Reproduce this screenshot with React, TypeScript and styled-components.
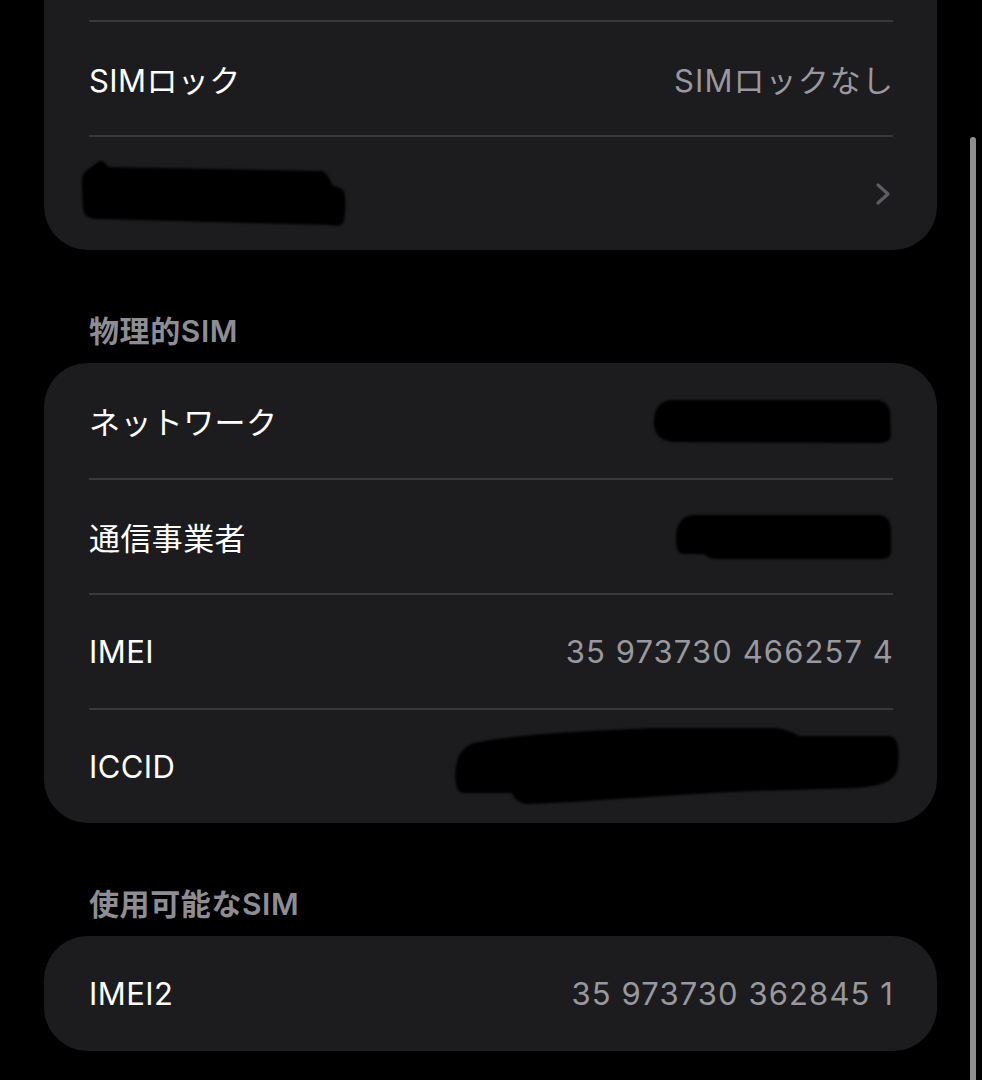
import { FC } from 'react';
import styled, { createGlobalStyle } from 'styled-components';

const GlobalStyle = createGlobalStyle`
  html, body {
    margin: 0;
    padding: 0;
    background: #000;
    overflow: hidden;
  }
  body {
    font-family: 'Inter', 'Noto Sans CJK JP', sans-serif;
    -webkit-font-smoothing: antialiased;
  }
`;

const Screen = styled.div`
  position: relative;
  width: 982px;
  height: 1080px;
  overflow: hidden;
  background: #000;
`;

const Content = styled.div`
  display: flex;
  flex-direction: column;
  margin-top: -95px;
  padding: 0 45px 0 44px;
`;

const Card = styled.div`
  background: #1c1c1e;
  border-radius: 44px;
  display: flex;
  flex-direction: column;
`;

const SectionHeader = styled.div`
  color: #8d8d93;
  font-size: 30px;
  font-weight: 600;
  line-height: 34px;
  letter-spacing: 0.6px;
  padding: 64px 45px 15px;
`;

const Row = styled.div`
  box-sizing: border-box;
  height: 115px;
  margin: 0 44px 0 45px;
  display: flex;
  align-items: center;
  justify-content: space-between;

  & + & {
    border-top: 2px solid #38383a;
  }
`;

const Label = styled.span`
  color: #fff;
  font-size: 31px;
  letter-spacing: 0.4px;
`;

const Value = styled.span`
  color: #98989e;
  font-size: 31px;
  letter-spacing: 1.1px;
  margin-right: -1px;
`;

const Redact = styled.svg<{ $shift?: number; $trail?: number }>`
  display: block;
  filter: blur(1.2px);
  margin-left: ${(p) => p.$shift ?? 0}px;
  margin-right: ${(p) => p.$trail ?? 0}px;
`;

const ChevronIcon = styled.svg`
  display: block;
  margin-right: 2px;
`;

const ScrollThumb = styled.div`
  position: absolute;
  right: 6px;
  top: 137px;
  width: 6px;
  height: 960px;
  border-radius: 3px;
  background: #8e8e90;
`;

const Chevron: FC = () => (
  <ChevronIcon width="16" height="24" viewBox="0 0 16 24">
    <polyline
      points="3,3 13,12 3,21"
      fill="none"
      stroke="#5c5c62"
      strokeWidth="3.2"
      strokeLinecap="round"
      strokeLinejoin="round"
    />
  </ChevronIcon>
);

const App: FC = () => {
  return (
    <Screen>
      <GlobalStyle />
      <Content>
        <Card>
          <Row />
          <Row>
            <Label>SIMロック</Label>
            <Value>SIMロックなし</Value>
          </Row>
          <Row>
            <Redact $shift={-9} width="268" height="70" viewBox="0 0 268 70">
              <path
                d="M4 14 C8 10 14 6 18 3 C22 1 26 4 28 8 L240 12 C246 12 250 20 252 26 L262 30 C266 32 266 50 264 62 C262 68 255 67 250 66 L20 60 C10 60 4 58 3 50 L2 24 C2 18 3 16 4 14 Z"
                fill="#000"
              />
            </Redact>
            <Chevron />
          </Row>
        </Card>

        <SectionHeader>物理的SIM</SectionHeader>
        <Card>
          <Row>
            <Label>ネットワーク</Label>
            <Redact width="240" height="46" viewBox="0 0 240 46">
              <path
                d="M20 2 L225 2 C233 3 236 8 237 14 L238 38 C237 43 232 45 226 45 L22 44 C8 44 1 36 1 24 C1 10 8 2 20 2 Z"
                fill="#000"
              />
            </Redact>
          </Row>
          <Row>
            <Label>通信事業者</Label>
            <Redact width="218" height="48" viewBox="0 0 218 48">
              <path
                d="M18 2 L205 2 C213 3 216 10 216 18 L216 38 C216 45 210 46 204 46 L40 46 C34 46 32 42 28 41 L8 41 C2 40 1 34 1 26 C1 12 6 3 18 2 Z"
                fill="#000"
              />
            </Redact>
          </Row>
          <Row>
            <Label>IMEI</Label>
            <Value>35 973730 466257 4</Value>
          </Row>
          <Row>
            <Label>ICCID</Label>
            <Redact $trail={-7} width="446" height="82" viewBox="0 0 446 82">
              <path
                d="M20 17 C60 8 150 4 200 2 L320 2 C335 3 340 8 345 10 L435 10 C443 11 446 20 444 40 C442 55 430 60 400 62 L300 65 C220 68 150 75 75 78 C65 78 60 72 58 67 L10 67 C2 67 0 55 2 40 C4 28 10 20 20 17 Z"
                fill="#000"
              />
            </Redact>
          </Row>
        </Card>

        <SectionHeader>使用可能なSIM</SectionHeader>
        <Card>
          <Row>
            <Label>IMEI2</Label>
            <Value>35 973730 362845 1</Value>
          </Row>
        </Card>
      </Content>
      <ScrollThumb />
    </Screen>
  );
};

export default App;
